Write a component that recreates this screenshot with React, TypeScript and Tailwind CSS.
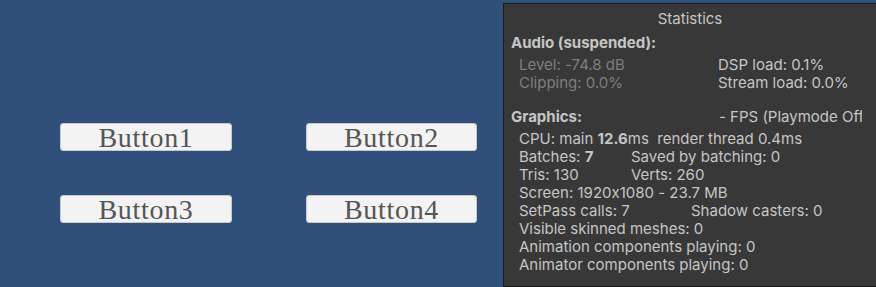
import React from 'react';

const BUTTONS = ['Button1', 'Button2', 'Button3', 'Button4'];

function GameButton({ label }: { label: string }) {
  return (
    <button className="h-[28px] rounded-[3px] bg-[#f3f3f3] border border-[#c8c8c8] flex items-center justify-center text-[#555555] text-[28px] leading-none font-['Liberation_Serif',serif] tracking-[0.7px]">
      <span className="mt-[2px]">{label}</span>
    </button>
  );
}

export default function App() {
  return (
    <div className="relative w-[876px] h-[287px] bg-[#30507b] overflow-hidden font-['Inter','Liberation_Sans',sans-serif] [font-feature-settings:'calt'_0]">
      <div className="pt-[123px] pl-[60px]">
        <div className="grid grid-cols-[172px_171px] gap-x-[74px] gap-y-[44px]">
          {BUTTONS.map((b) => <GameButton key={b} label={b} />)}
        </div>
      </div>

      <div className="absolute left-[503px] top-[3px] w-[380px] bottom-0 bg-[#383838] border border-[#1c1c1c] overflow-hidden text-[15px] leading-[18px] text-[#c6c6c6] whitespace-nowrap">
        <div className="pt-[6px] w-[372px] text-center">Statistics</div>

        <div className="mt-[6px] pl-[7px] font-bold">Audio (suspended):</div>
        <div className="mt-[4px] pl-[15px] grid grid-cols-[199px_auto]">
          <span className="text-[#7e7e7e]">Level: -74.8 dB</span>
          <span>DSP load: 0.1%</span>
          <span className="text-[#7e7e7e]">Clipping: 0.0%</span>
          <span>Stream load: 0.0%</span>
        </div>

        <div className="mt-[16px] pl-[7px] grid grid-cols-[208px_auto]">
          <span className="font-bold">Graphics:</span>
          <span className="w-[143px] overflow-hidden">- FPS (Playmode Off)</span>
        </div>
        <div className="mt-[4px] pl-[15px] flex flex-col">
          <span>CPU: main <b>12.6</b>ms&nbsp; render thread 0.4ms</span>
          <div className="grid grid-cols-[112px_auto]">
            <span>Batches: <b>7</b></span>
            <span>Saved by batching: 0</span>
            <span>Tris: 130</span>
            <span>Verts: 260</span>
          </div>
          <span>Screen: 1920x1080 - 23.7 MB</span>
          <div className="grid grid-cols-[172px_auto]">
            <span>SetPass calls: 7</span>
            <span>Shadow casters: 0</span>
          </div>
          <span>Visible skinned meshes: 0</span>
          <span>Animation components playing: 0</span>
          <span>Animator components playing: 0</span>
        </div>
      </div>
    </div>
  );
}
